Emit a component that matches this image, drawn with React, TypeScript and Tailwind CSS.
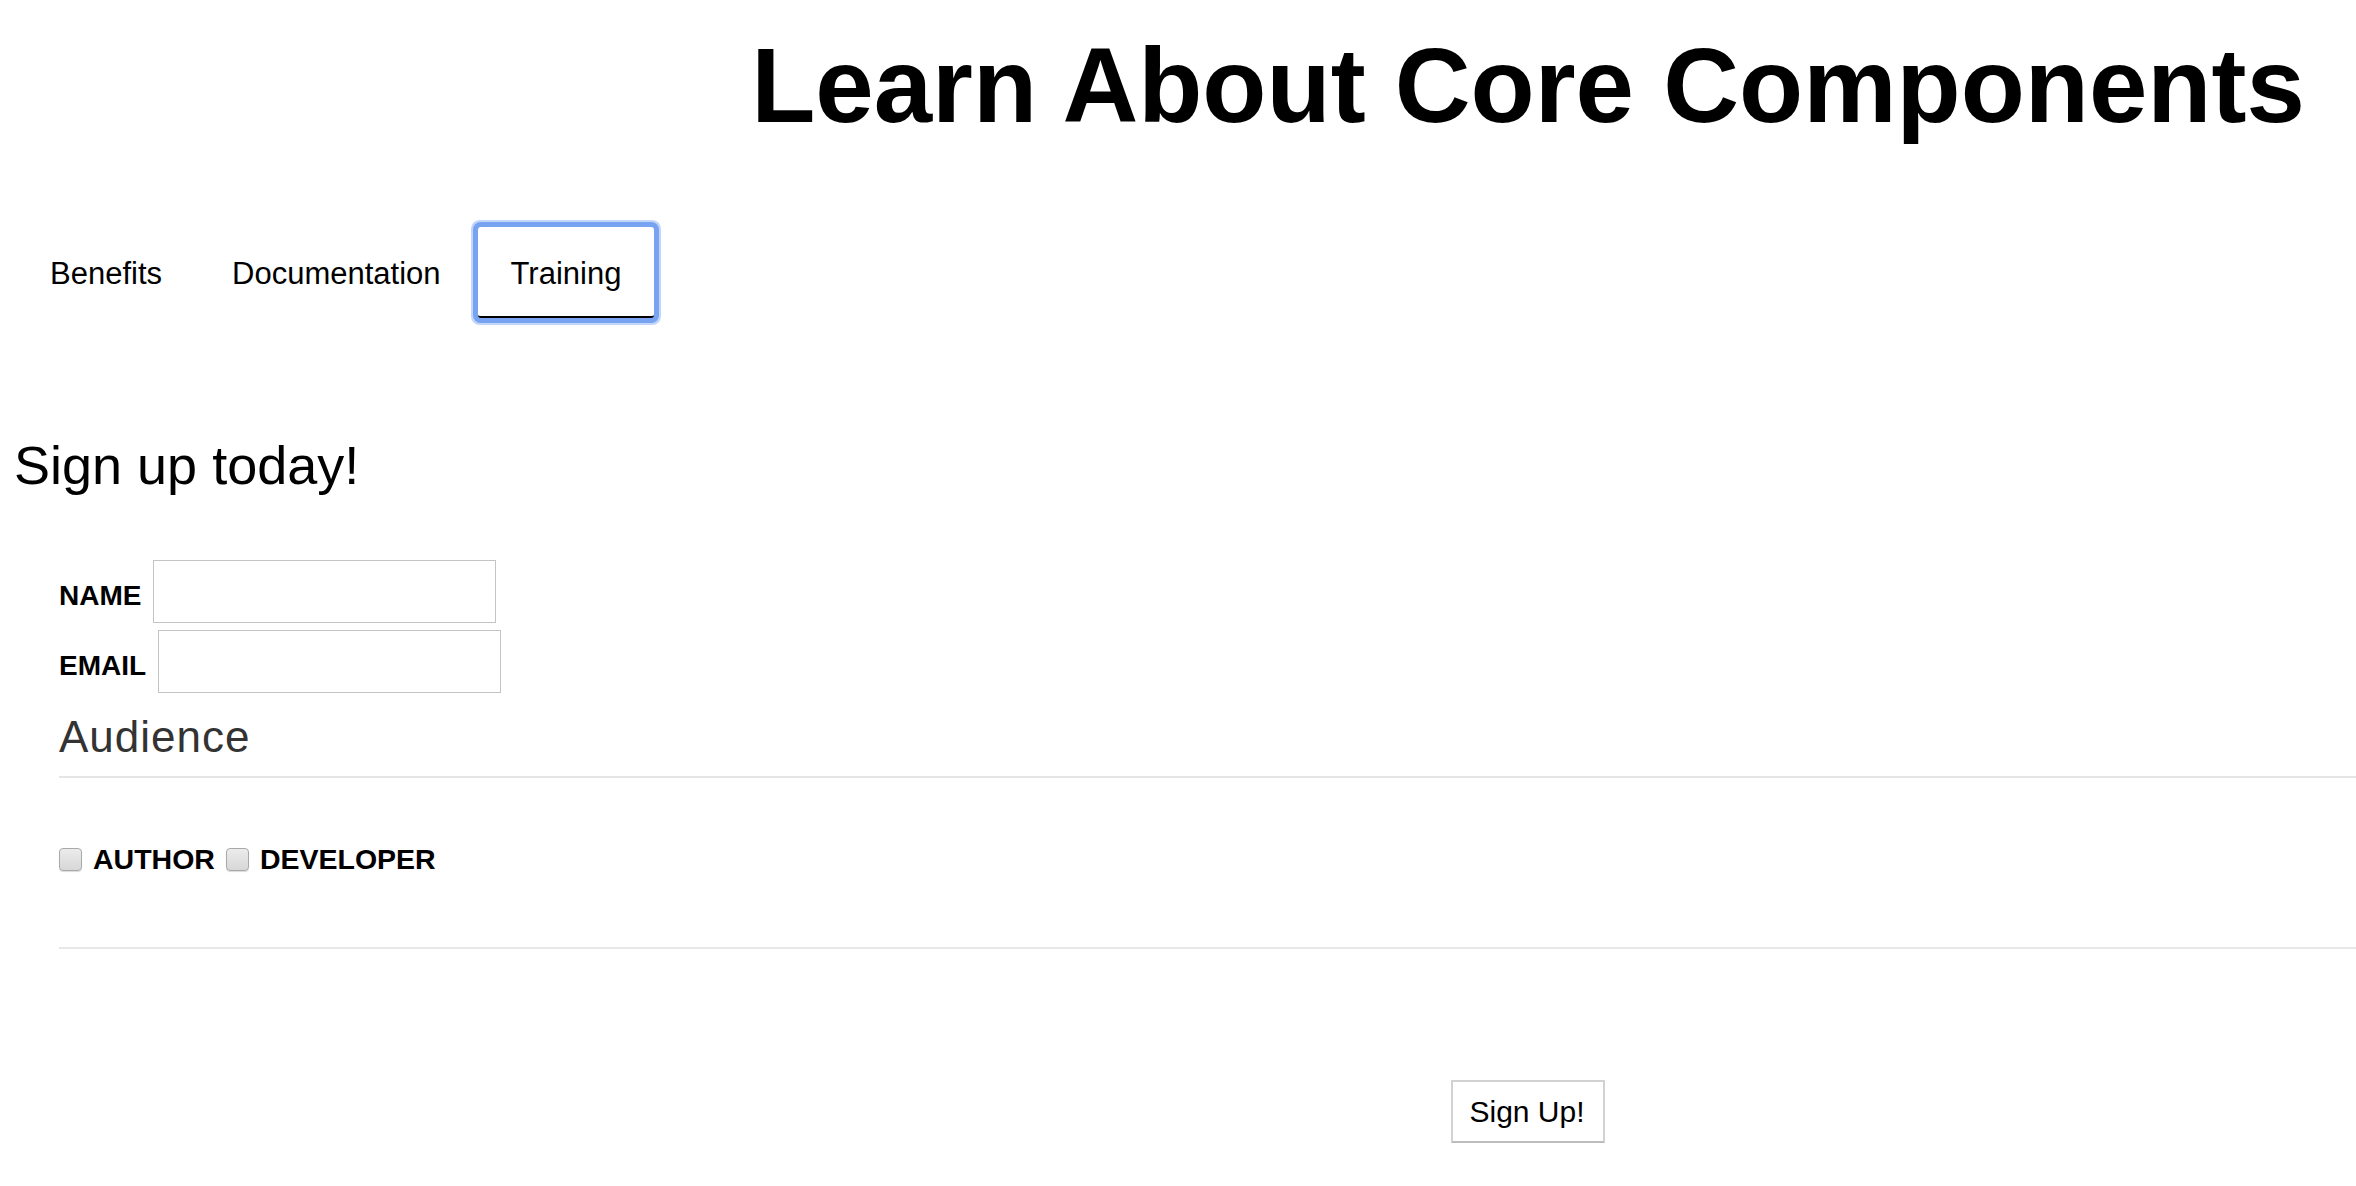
import { useState } from 'react'

const tabs = ['Benefits', 'Documentation', 'Training']

function Checkbox({ label }: { label: string }) {
  return (
    <label className="flex items-center">
      <span className="block w-[23px] h-[23px] rounded-[4px] border border-[#a9a9a9] bg-gradient-to-b from-[#ececec] to-[#d7d7d7] shadow-[0_1px_1px_rgba(0,0,0,0.15)]" />
      <span className="ml-[11px] text-[28.5px] font-bold leading-none">{label}</span>
    </label>
  )
}

function App() {
  const [active, setActive] = useState('Training')

  return (
    <div className="min-h-screen bg-white text-black font-['Liberation_Sans',Arial,sans-serif] pb-10">
      {/* Titulo */}
      <div className="ml-[700px] pt-[33px] text-center">
        <h1 className="text-[105px] font-bold leading-none whitespace-nowrap">Learn About Core Components</h1>
      </div>

      {/* Abas */}
      <div className="flex gap-[4px] pl-[17px] mt-[89px]">
        {tabs.map((t) => (
          <button
            key={t}
            onClick={() => setActive(t)}
            className={
              t === active
                ? 'h-[91px] pt-[4px] px-[33px] text-[31px] leading-none border-b-2 border-black rounded-[3px] shadow-[0_0_0_5px_#77a3f1,0_0_0_7px_#c2d6f9] bg-white'
                : 'h-[91px] pt-[4px] px-[33px] text-[31px] leading-none border-b-2 border-transparent bg-white'
            }
          >
            {t}
          </button>
        ))}
      </div>

      <h2 className="mt-[120px] pl-[14px] text-[54px] leading-none">Sign up today!</h2>

      <form className="mt-[68px] pl-[59px]" onSubmit={(e) => e.preventDefault()}>
        <div className="flex items-center">
          <span className="mt-[9px] text-[28px] font-bold leading-none">NAME</span>
          <input className="ml-[12px] w-[343px] h-[63px] border border-[#c4c4c4] outline-none px-2 text-[28px]" />
        </div>
        <div className="flex items-center mt-[7px]">
          <span className="mt-[9px] text-[28px] font-bold leading-none">EMAIL</span>
          <input className="ml-[12px] w-[343px] h-[63px] border border-[#c4c4c4] outline-none px-2 text-[28px]" />
        </div>

        <fieldset className="mt-[22px]">
          <div className="text-[44px] leading-none text-[#333] tracking-[1px]">Audience</div>
          <div className="mt-[17px] h-[2px] bg-[#e5e5e5]" />
          <div className="flex items-center gap-[11px] mt-[70px] h-[23px]">
            <Checkbox label="AUTHOR" />
            <Checkbox label="DEVELOPER" />
          </div>
          <div className="mt-[76px] h-[2px] bg-[#e8e8e8]" />
        </fieldset>
      </form>

      <div className="ml-[700px] mt-[131px] flex justify-center">
        <button className="h-[63px] pl-[16px] pr-[18px] text-[30px] leading-none border-2 border-[#d2d2d2] border-b-[#bdbdbd] bg-white">
          Sign Up!
        </button>
      </div>
    </div>
  )
}

export default App
